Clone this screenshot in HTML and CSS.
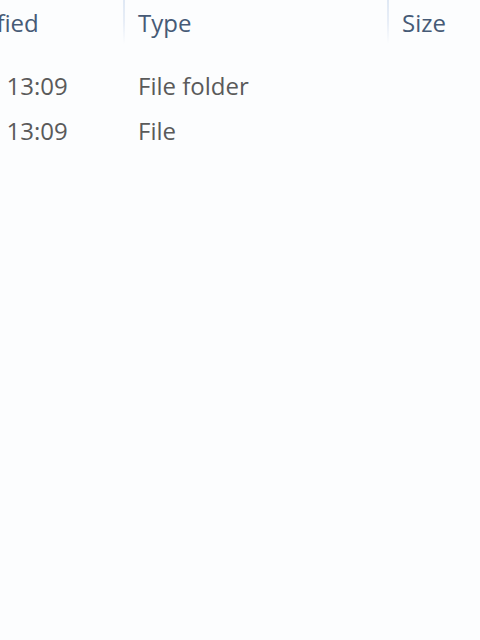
FILE: index.html
```html
<!DOCTYPE html>
<html>
<head>
<meta charset="utf-8">
<link rel="stylesheet" href="styles.css">
</head>
<body>
<div class="view">
  <div class="list">
    <div class="header">
      <div class="col date"><span class="label">Date modified</span><span class="sep"></span></div>
      <div class="col type"><span class="label">Type</span><span class="sep"></span></div>
      <div class="col size"><span class="label">Size</span></div>
    </div>
    <div class="row">
      <div class="cell date">28/05/2015 13:09</div>
      <div class="cell type">File folder</div>
      <div class="cell size"></div>
    </div>
    <div class="row">
      <div class="cell date">28/05/2015 13:09</div>
      <div class="cell type">File</div>
      <div class="cell size"></div>
    </div>
  </div>
</div>
</body>
</html>
```
FILE: styles.css
```css
html, body {
  margin: 0;
  padding: 0;
  background: #fcfdfe;
  width: 480px;
  height: 640px;
  overflow: hidden;
}
.view {
  width: 480px;
  height: 640px;
  overflow: hidden;
  font-family: "Open Sans", "Noto Sans", sans-serif;
  font-size: 24px;
}
.list {
  margin-left: -142px;
  width: 700px;
}
.header, .row {
  display: grid;
  grid-template-columns: 267px 264px 200px;
}
.header {
  height: 44px;
  color: #465a76;
}
.col {
  display: flex;
  align-items: flex-start;
  justify-content: space-between;
  padding-left: 13px;
  height: 44px;
}
.col .label {
  padding-top: 7px;
  line-height: 32px;
  white-space: nowrap;
}
.col.date .label {
  padding-left: 9px;
}
.sep {
  width: 2px;
  height: 44px;
  background: linear-gradient(#dfe8f4, #e8eef7 50%, rgba(252,253,254,0));
}
.row {
  height: 45px;
  align-items: center;
  color: #5a5a5a;
}
.header + .row {
  margin-top: 19px;
}
.cell {
  padding-left: 13px;
  white-space: nowrap;
}
.cell.date {
  padding-left: 15px;
}
```
